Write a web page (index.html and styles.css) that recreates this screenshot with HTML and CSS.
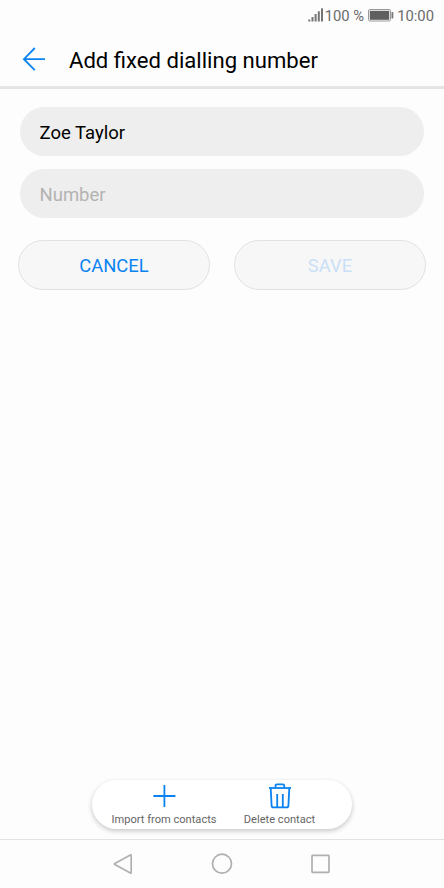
FILE: index.html
```html
<!DOCTYPE html>
<html lang="en">
<head>
    <meta charset="UTF-8">
    <title>Add fixed dialling number</title>
    <link rel="stylesheet" href="styles.css">
</head>
<body>
    <div class="status-bar">
        <svg class="signal" width="16" height="14" viewBox="0 0 16 14" fill="#757575">
            <rect x="0.3" y="11.5" width="2" height="2"/>
            <rect x="3.5" y="9" width="2" height="4.5"/>
            <rect x="6.6" y="6" width="2" height="7.5"/>
            <rect x="9.8" y="3.3" width="2" height="10.2"/>
            <rect x="13" y="0.3" width="2" height="13.2"/>
        </svg>
        <span class="percent">100 %</span>
        <svg class="battery" width="26" height="13" viewBox="0 0 26 13">
            <rect x="0.5" y="0.5" width="22" height="11.5" rx="1.5" fill="none" stroke="#999"/>
            <rect x="1.8" y="1.8" width="19.4" height="9" fill="#5f5f5f"/>
            <rect x="23.5" y="3" width="1.8" height="6.5" rx="0.6" fill="#777"/>
        </svg>
        <span class="time">10:00</span>
    </div>

    <header>
        <svg width="24" height="24" viewBox="0 0 24 24" fill="none" stroke="#0b82f2" stroke-width="1.8">
            <path d="M12.8 1 L1.9 12.2 L12.8 23.2 M1.9 12.2 H23"/>
        </svg>
        <h1>Add fixed dialling number</h1>
    </header>

    <main>
        <input type="text" value="Zoe Taylor">
        <input type="text" placeholder="Number">
        <div class="buttons">
            <button>CANCEL</button>
            <button disabled>SAVE</button>
        </div>
    </main>

    <div class="toolbar">
        <div class="action import">
            <svg width="26" height="26" viewBox="0 0 26 26" fill="none" stroke="#0b82f2" stroke-width="1.8">
                <path d="M13.4 2 V24 M2.4 13 H24.4"/>
            </svg>
            <span>Import from contacts</span>
        </div>
        <div class="action delete">
            <svg width="26" height="26" viewBox="0 0 26 26" fill="none" stroke="#0b82f2" stroke-width="1.8">
                <path d="M2 5 H24"/>
                <path d="M8.5 5 V2.6 Q8.5 1.4 9.7 1.4 H16 Q17.2 1.4 17.2 2.6 V5"/>
                <path d="M3.7 5 L4.6 22.6 Q4.7 24.4 6.5 24.4 H19.5 Q21.3 24.4 21.4 22.6 L22.3 5"/>
                <path d="M10.2 11 V24 M15.8 11 V24"/>
            </svg>
            <span>Delete contact</span>
        </div>
    </div>

    <nav>
        <svg width="22" height="22" viewBox="0 0 22 22">
            <path d="M19.2 2.4 V19.6 Q19.2 20.5 18.3 20 L2.9 11.6 Q2 11 2.9 10.4 L18.3 2 Q19.2 1.5 19.2 2.4 Z"/>
        </svg>
        <svg width="22" height="22" viewBox="0 0 22 22">
            <circle cx="11" cy="10.7" r="9.5"/>
        </svg>
        <svg width="22" height="22" viewBox="0 0 22 22">
            <rect x="2" y="2.4" width="17" height="17" rx="0.6"/>
        </svg>
    </nav>
</body>
</html>
```

FILE: styles.css
```css
* {
    box-sizing: border-box;
}
body {
    margin: 0;
    height: 888px;
    display: flex;
    flex-direction: column;
    background: #fdfdfd;
    color: #000;
    font-family: Roboto, sans-serif;
}
.status-bar {
    height: 32px;
    padding: 0 10px;
    display: flex;
    align-items: center;
    justify-content: flex-end;
    font-size: 14.8px;
    color: #6b6b6b;
}
.signal {
    margin-right: 1px;
    margin-top: -2px;
}
.battery {
    margin: -1px 3px 0 4px;
}
header {
    height: 57px;
    padding: 0 22px;
    display: flex;
    align-items: center;
    border-bottom: 3px solid #e5e5e5;
}
h1 {
    margin: 2px 0 0 23px;
    font-size: 22.1px;
    font-weight: 400;
    white-space: nowrap;
}
main {
    flex: 1;
    padding: 18px 18px 0;
}
input {
    display: block;
    width: 404px;
    height: 49px;
    margin: 0 2px 13px;
    padding: 3px 19.5px 0;
    border: none;
    border-radius: 25px;
    background: #eee;
    color: #000;
    font-family: inherit;
    font-size: 18.5px;
}
input::placeholder {
    color: #b3b3b3;
}
.buttons {
    display: flex;
    gap: 24px;
    margin-top: 22px;
}
button {
    flex: 1;
    height: 50px;
    padding: 1px 0 0;
    border: 1px solid #e2e2e2;
    border-radius: 25px;
    background: #f7f7f7;
    color: #0b82f2;
    font-family: inherit;
    font-size: 18.4px;
}
button:disabled {
    color: #cae0f6;
}
.toolbar {
    width: 260px;
    height: 49px;
    margin: 0 0 10px 92px;
    display: flex;
    border-radius: 25px;
    background: #fff;
    box-shadow: 0 2px 5px rgba(0, 0, 0, 0.22);
}
.action {
    display: flex;
    flex-direction: column;
    align-items: center;
    padding-top: 3px;
    font-size: 11.1px;
    line-height: 14px;
    color: #666;
    white-space: nowrap;
}
.action span {
    margin-top: 4px;
}
.import {
    width: 144px;
}
.delete {
    width: 87px;
}
nav {
    height: 49px;
    padding: 0 112px;
    display: flex;
    align-items: center;
    justify-content: space-between;
    border-top: 1px solid #e2e2e2;
}
nav svg {
    fill: none;
    stroke: #b0b0b0;
    stroke-width: 1.7;
}
```
